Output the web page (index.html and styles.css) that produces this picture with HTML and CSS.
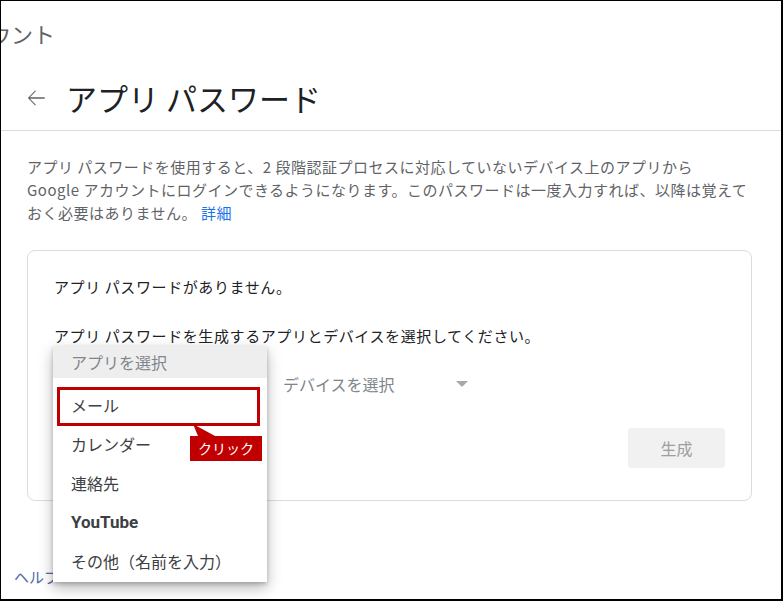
FILE: index.html
```html
<!DOCTYPE html>
<html lang="ja">
<head>
    <meta charset="UTF-8">
    <title>アプリ パスワード</title>
    <link rel="stylesheet" href="styles.css">
</head>
<body>
    <div class="page">
        <!-- Breadcrumb -->
        <div class="crumb">アカウント</div>

        <!-- Title -->
        <div class="title-row">
            <svg class="back-icon" viewBox="0 0 24 24"><path d="M20 11.3H6.4l5.5-5.5-.7-.7L4.5 12l6.7 6.9.7-.7-5.5-5.5H20z"/></svg>
            <h1 class="page-title">アプリ パスワード</h1>
        </div>
        <div class="divider"></div>

        <p class="intro">アプリ パスワードを使用すると、2 段階認証プロセスに対応していないデバイス上のアプリから<br>Google アカウントにログインできるようになります。このパスワードは一度入力すれば、以降は覚えて<br>おく必要はありません。 <a href="#">詳細</a></p>

        <!-- App password card -->
        <section class="card">
            <p class="card-text first">アプリ パスワードがありません。</p>
            <p class="card-text">アプリ パスワードを生成するアプリとデバイスを選択してください。</p>

            <div class="select-row">
                <div class="select">
                    <span>アプリを選択</span>
                    <span class="caret"></span>
                </div>
                <div class="select">
                    <span>デバイスを選択</span>
                    <span class="caret"></span>
                </div>
            </div>

            <div class="button-row">
                <button class="generate-btn">生成</button>
            </div>

            <!-- Open app dropdown -->
            <div class="menu">
                <div class="menu-head">アプリを選択</div>
                <ul class="menu-list">
                    <li>メール</li>
                    <li>カレンダー</li>
                    <li>連絡先</li>
                    <li class="brand">YouTube</li>
                    <li>その他（名前を入力）</li>
                </ul>
                <div class="highlight"></div>
                <div class="callout">クリック</div>
            </div>
        </section>

        <div class="help">ヘルプ</div>
    </div>
</body>
</html>
```

FILE: styles.css
```css
/* General */
body {
    margin: 0;
    font-family: "Noto Sans CJK JP", "Noto Sans", sans-serif;
    color: #202124;
    background: #fff;
}

.page {
    box-sizing: border-box;
    width: 783px;
    height: 601px;
    border-style: solid;
    border-color: #000;
    border-width: 1px 2px 2px 1px;
    overflow: hidden;
}

/* Header */
.crumb {
    margin: 17px 0 0 -56px;
    font-size: 22px;
    line-height: 30px;
    color: #5f6368;
    white-space: nowrap;
}

.title-row {
    display: flex;
    align-items: center;
    height: 40px;
    margin-top: 30px;
    padding-left: 22px;
}

.back-icon {
    width: 26px;
    height: 26px;
    fill: #5f6368;
}

.page-title {
    margin: 0 0 0 17px;
    font-size: 31px;
    font-weight: 400;
    line-height: 40px;
    color: #202124;
}

.divider {
    height: 1px;
    margin-top: 12px;
    background: #dadce0;
}

/* Intro */
.intro {
    margin: 24px 10px 0 26px;
    font-size: 15px;
    line-height: 23px;
    color: #5f6368;
    letter-spacing: 0.5px;
    white-space: nowrap;
}

.intro a {
    color: #1a73e8;
    text-decoration: none;
}

/* Card */
.card {
    position: relative;
    margin: 26px 29px 0 26px;
    padding: 0 26px 32px 26px;
    border: 1px solid #dadce0;
    border-radius: 8px;
}

.card-text {
    margin: 25px 0 0;
    font-size: 15px;
    line-height: 24px;
    color: #202124;
    letter-spacing: 0.6px;
}

.card-text.first {
    margin-top: 24px;
}

.select-row {
    display: flex;
    gap: 26px;
    margin-top: 16px;
    height: 40px;
}

.select {
    display: flex;
    align-items: center;
    justify-content: space-between;
    width: 186px;
    font-size: 16px;
    color: #80868b;
}

.select:first-child {
    width: 203px;
}

.caret {
    width: 0;
    height: 0;
    margin-right: 1px;
    border-left: 6px solid transparent;
    border-right: 6px solid transparent;
    border-top: 6px solid #a8a8a8;
}

.button-row {
    display: flex;
    justify-content: flex-end;
    margin-top: 24px;
}

.generate-btn {
    width: 97px;
    height: 40px;
    border: none;
    border-radius: 4px;
    background: #f1f1f1;
    color: #9e9e9e;
    font-family: inherit;
    font-size: 16px;
}

/* Dropdown menu */
.menu {
    position: absolute;
    left: 25px;
    top: 95px;
    width: 214px;
    height: 236px;
    background: #fff;
    box-shadow: 0 2px 4px rgba(0, 0, 0, 0.2), 0 6px 14px rgba(0, 0, 0, 0.28);
}

.menu-head {
    height: 32px;
    padding-left: 18px;
    background: #eeeeee;
    font-size: 16px;
    line-height: 32px;
    color: #80868b;
}

.menu-list {
    list-style: none;
    margin: 8px 0 0;
    padding: 0;
}

.menu-list li {
    height: 39px;
    padding-left: 18px;
    font-size: 16px;
    line-height: 39px;
    color: #3c4043;
}

.menu-list li.brand {
    font-family: Roboto, "Noto Sans", sans-serif;
    font-weight: 700;
    font-size: 17px;
}

/* Annotation */
.highlight {
    position: absolute;
    left: 4px;
    top: 41px;
    box-sizing: border-box;
    width: 203px;
    height: 39px;
    border: 3px solid #c00000;
}

.callout {
    position: absolute;
    left: 137px;
    top: 90px;
    width: 72px;
    height: 25px;
    background: #c00000;
    color: #fff;
    font-size: 14px;
    line-height: 25px;
    text-align: center;
}

.callout::before {
    content: "";
    position: absolute;
    left: 3px;
    top: -12px;
    width: 22px;
    height: 12px;
    background: #c00000;
    clip-path: polygon(0 0, 22px 12px, 5px 12px);
}

/* Footer */
.help {
    margin: 64px 0 0 13px;
    font-size: 15px;
    line-height: 24px;
    color: #4f6aa8;
}
```
